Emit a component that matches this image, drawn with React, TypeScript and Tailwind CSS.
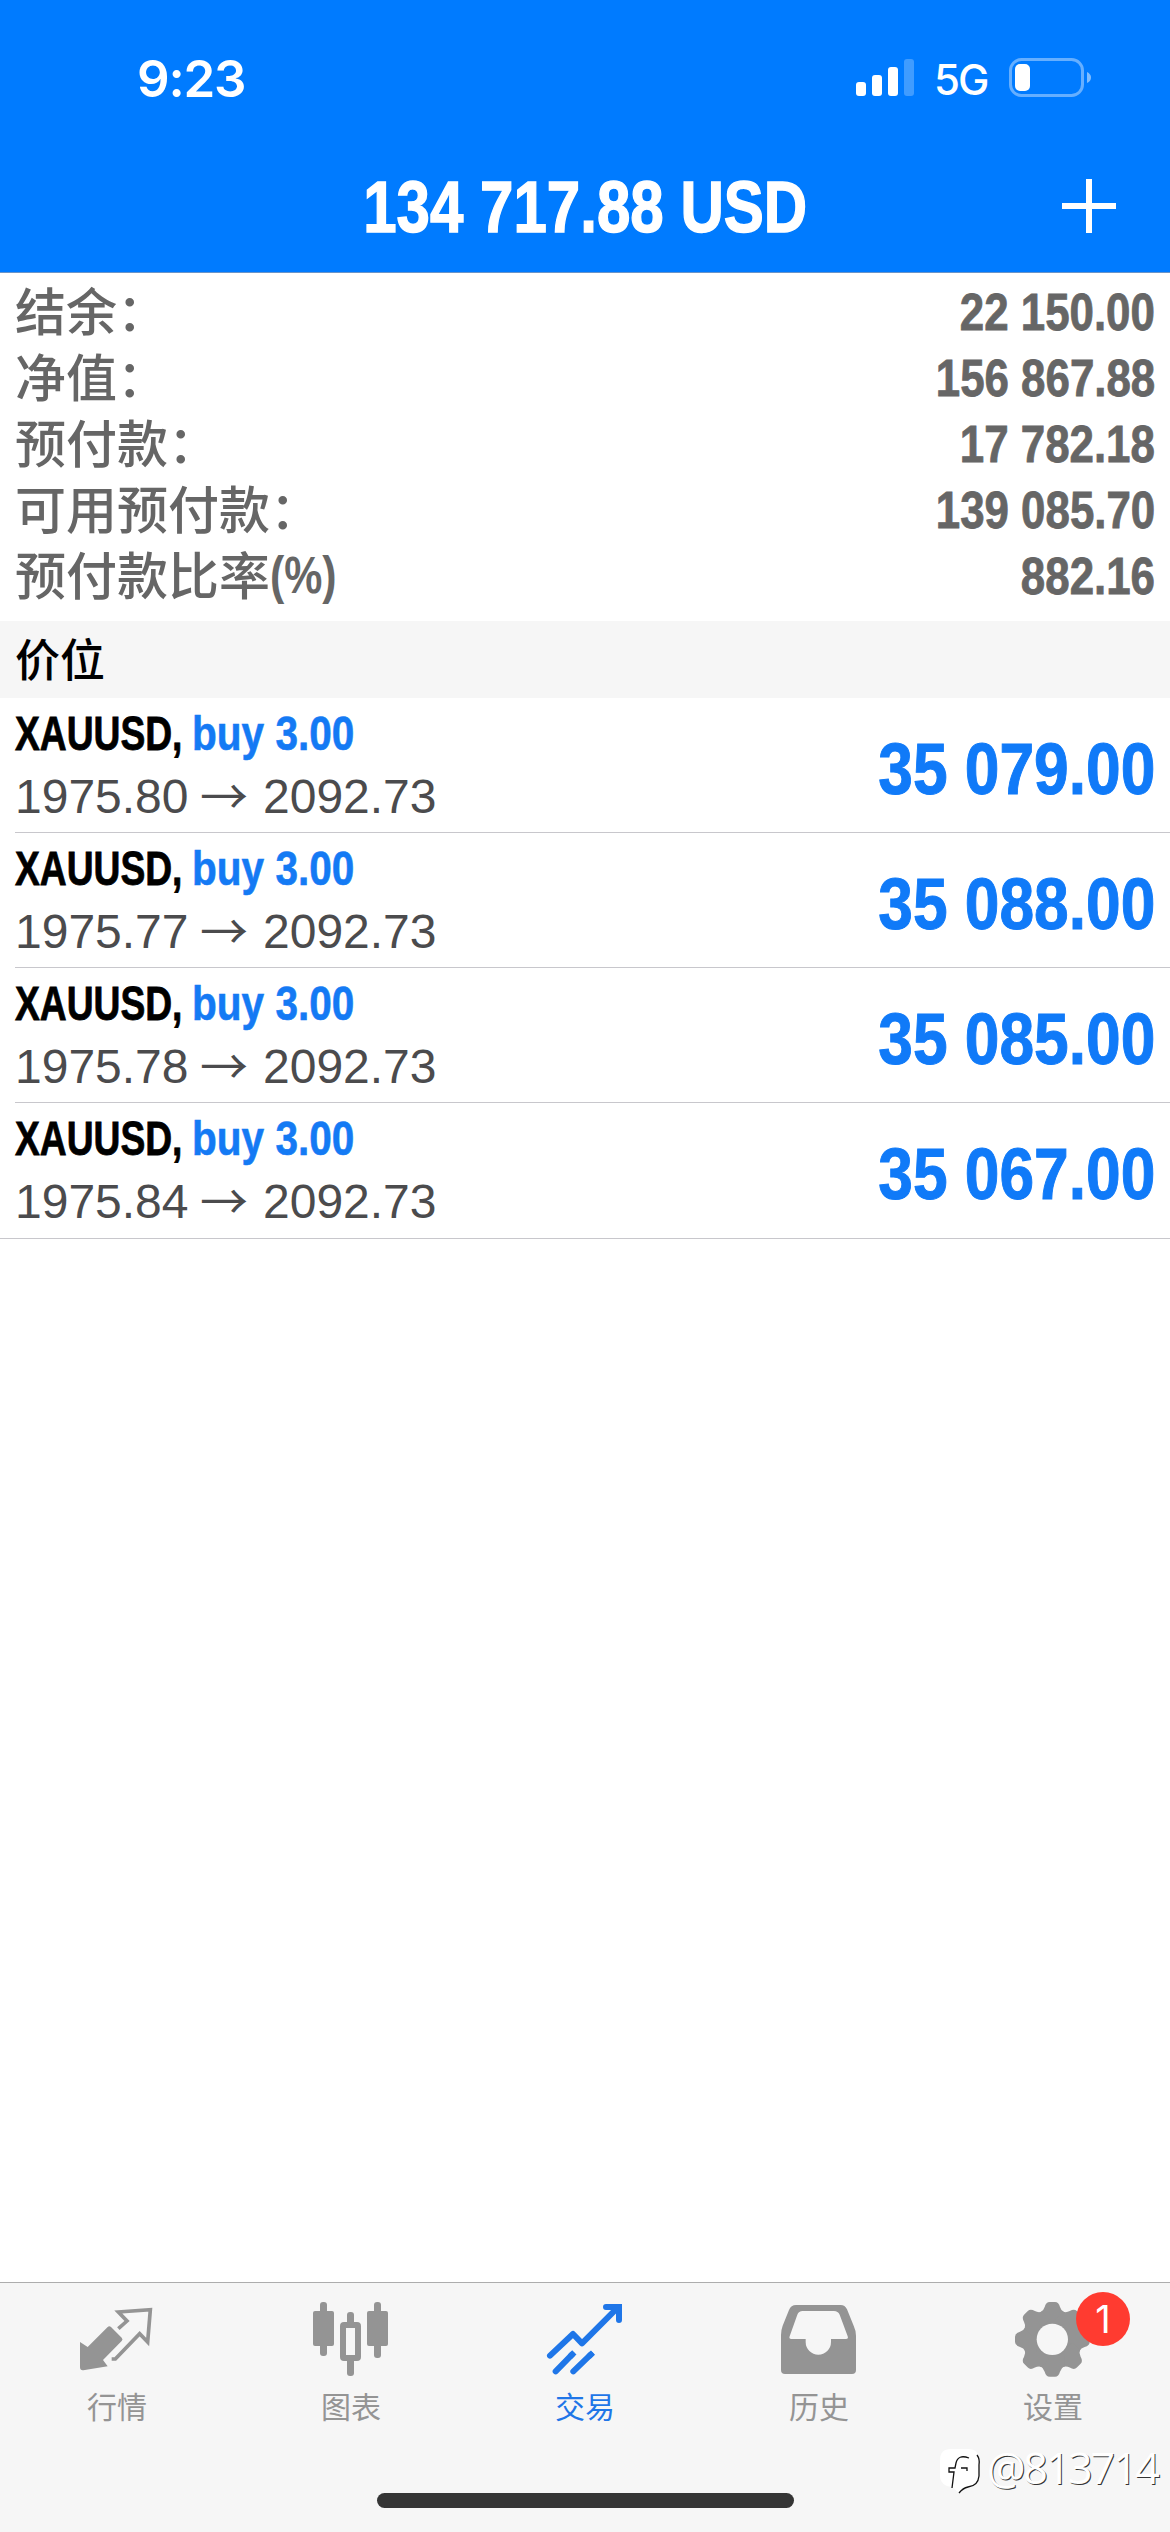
import React from 'react';

interface Position {
  symbol: string;
  action: string;
  open: string;
  current: string;
  profit: string;
}

const summary = [
  { label: '结余：', value: '22 150.00' },
  { label: '净值：', value: '156 867.88' },
  { label: '预付款：', value: '17 782.18' },
  { label: '可用预付款：', value: '139 085.70' },
  { label: '预付款比率', suffix: '(%)', value: '882.16' },
];

const positions: Position[] = [
  { symbol: 'XAUUSD,', action: 'buy 3.00', open: '1975.80', current: '2092.73', profit: '35 079.00' },
  { symbol: 'XAUUSD,', action: 'buy 3.00', open: '1975.77', current: '2092.73', profit: '35 088.00' },
  { symbol: 'XAUUSD,', action: 'buy 3.00', open: '1975.78', current: '2092.73', profit: '35 085.00' },
  { symbol: 'XAUUSD,', action: 'buy 3.00', open: '1975.84', current: '2092.73', profit: '35 067.00' },
];

const QuotesIcon = () => (
  <svg viewBox="111 90 240 240" className="w-20 h-20">
    <path
      d="M120 216L143 231L203 171Q208 166 213 171L245 203Q250 208 245 213L189 270L203 289L130 301Q120 302 120 292Z"
      fill="currentColor"
    />
    <path
      d="M235 176L261 153L235 126L331 119L323 216L299 191L226 267H215"
      fill="none"
      stroke="currentColor"
      strokeWidth="11"
    />
  </svg>
);

const ChartIcon = () => (
  <svg viewBox="813 90 240 240" className="w-20 h-20" fill="currentColor">
    <rect x="840" y="96" width="21" height="162" rx="9" />
    <rect x="819" y="123" width="63" height="105" rx="6" />
    <rect x="1002" y="96" width="21" height="168" rx="9" />
    <rect x="981" y="123" width="63" height="105" rx="6" />
    <rect x="921" y="126" width="21" height="40" rx="9" />
    <rect x="921" y="262" width="21" height="56" rx="9" />
    <rect x="909" y="165" width="45" height="99" rx="3" fill="none" stroke="currentColor" strokeWidth="18" />
  </svg>
);

const TradeIcon = () => (
  <svg viewBox="135 90 240 240" className="w-20 h-20" fill="none" stroke="currentColor" strokeWidth="18">
    <path d="M150 257L219 192L246 220L350 116" strokeLinecap="round" strokeLinejoin="round" />
    <path d="M318 111H357V150" strokeLinecap="round" />
    <path d="M167 304L216 254M220 304L272 254" strokeLinecap="round" />
    <path d="M210 260L223 247M266 260L279 248" />
  </svg>
);

const HistoryIcon = () => (
  <svg viewBox="837 90 240 240" className="w-20 h-20" fill="currentColor">
    <path
      fillRule="evenodd"
      d="M843 300V195Q843 180 848 167L867 120Q873 105 888 105H1022Q1035 105 1041 118L1061 167Q1068 182 1068 197V300Q1068 312 1056 312H855Q843 312 843 300ZM892 134L869 199Q866 207 874 207H917V216A38 38 0 0 0 993 216V207H1038Q1046 207 1043 199L1019 134Q1014 123 1002 123H908Q896 123 892 134Z"
    />
  </svg>
);

const SettingsIcon = () => (
  <svg viewBox="339 90 240 240" className="w-20 h-20" fill="currentColor">
    <circle cx="457" cy="208" r="89" />
    {[0, 45, 90, 135, 180, 225, 270, 315].map((angle) => (
      <path
        key={angle}
        transform={`rotate(${angle} 457 208)`}
        d="M421 127Q431 122 434 111Q438 96 449 96H465Q476 96 480 111Q483 122 493 127V160H421Z"
      />
    ))}
    <circle cx="457" cy="208" r="47" fill="#f6f6f6" />
  </svg>
);

const tabs = [
  { label: '行情', icon: QuotesIcon },
  { label: '图表', icon: ChartIcon },
  { label: '交易', icon: TradeIcon, active: true },
  { label: '历史', icon: HistoryIcon },
  { label: '设置', icon: SettingsIcon, badge: 1 },
];

const StatusBar = () => (
  <div className="h-[140px] pl-[137px] pr-[77px] pt-[58px] flex justify-between items-start">
    <span className="font-['Inter',sans-serif] text-[51px] leading-[41px] font-semibold tracking-[-1.2px]">9:23</span>
    <div className="flex items-start">
      <svg viewBox="0 0 58 39" className="w-[58px] h-[39px]" fill="white">
        <rect x="0" y="24" width="10" height="14" rx="3" />
        <rect x="16" y="17" width="10" height="21" rx="3" />
        <rect x="32" y="9" width="10" height="29" rx="3" />
        <rect x="48" y="1" width="10" height="37" rx="3" opacity="0.25" />
      </svg>
      <span className="w-[55px] ml-5 mr-5 font-['Inter',sans-serif] text-[42px] leading-[43px] font-medium tracking-[-2px]">
        5G
      </span>
      <svg viewBox="0 0 84 39" className="w-[84px] h-[39px]">
        <rect x="1.5" y="1.5" width="72" height="36" rx="11" fill="none" stroke="white" strokeWidth="3" opacity="0.4" />
        <rect x="6" y="6" width="15" height="27" rx="5" fill="white" />
        <path d="M78 14Q82 16 82 19.5Q82 23 78 25Z" fill="white" opacity="0.5" />
      </svg>
    </div>
  </div>
);

const App: React.FC = () => {
  return (
    <div className="relative w-[1170px] h-[2532px] flex flex-col bg-white overflow-hidden font-['Liberation_Sans','Noto_Sans_CJK_SC',sans-serif]">
      <header className="h-[273px] bg-[#007bff] border-b border-[#6a94c8] text-white">
        <StatusBar />
        <div className="h-[132px] grid grid-cols-[1fr_auto_1fr] items-center">
          <div />
          <h1 className="pt-[3px] text-[72px] leading-[129px] font-bold w-[440px] flex justify-center whitespace-nowrap">
            <span className="scale-x-[0.834] [-webkit-text-stroke:1.4px]">134 717.88 USD</span>
          </h1>
          <svg viewBox="0 0 54 54" className="w-[54px] h-[54px] justify-self-end mr-[54px]" stroke="white" strokeWidth="6">
            <path d="M0 27H54M27 0V54" />
          </svg>
        </div>
      </header>

      <section className="h-[348px] pt-[6px] pl-[15px] pr-[15px] text-[#666666]">
        {summary.map((row) => (
          <div key={row.label} className="h-[66px] flex justify-between text-[51px] whitespace-nowrap">
            <span className="flex leading-[60px] font-['Noto_Sans_CJK_SC',sans-serif] font-medium">
              {row.label}
              {row.suffix && (
                <span className="font-['Liberation_Sans',sans-serif] leading-[66px] font-bold origin-left scale-x-[0.84]">
                  {row.suffix}
                </span>
              )}
            </span>
            <span className="leading-[68px] font-bold origin-right scale-x-[0.86] [-webkit-text-stroke:0.8px]">{row.value}</span>
          </div>
        ))}
      </section>

      <div className="h-[77px] pl-[15px] bg-[#f6f6f6] font-['Noto_Sans_CJK_SC',sans-serif] text-[45px] leading-[73px] font-medium text-black">
        价位
      </div>

      <section className="border-b border-[#c8c7cc] bg-white">
        {positions.map((p, i) => (
          <div key={i} className="pl-[15px]">
            <div
              className={`h-[135px] pr-[15px] flex justify-between items-start whitespace-nowrap ${
                i < positions.length - 1 ? 'border-b border-[#c8c7cc]' : ''
              }`}
            >
              <div className="pt-1">
                <div className="flex text-[48px] leading-[64px] font-bold">
                  <span className="w-[177px] shrink-0">
                    <span className="inline-block origin-left scale-x-[0.775] [-webkit-text-stroke:0.8px] text-black">{p.symbol}</span>
                  </span>
                  <span className="inline-block origin-left scale-x-[0.845] [-webkit-text-stroke:0.6px] text-[#147af4]">{p.action}</span>
                </div>
                <div className="flex text-[48px] leading-[62px] text-[#4b4b4d]">
                  <span className="w-[185px]">{p.open}</span>
                  <span className="w-[63px] leading-[54px] font-['Noto_Sans_CJK_SC',sans-serif]">→</span>
                  <span>{p.current}</span>
                </div>
              </div>
              <span className="pt-[3px] text-[72px] leading-[136px] font-bold origin-right scale-x-[0.865] [-webkit-text-stroke:1px] text-[#107af8]">
                {p.profit}
              </span>
            </div>
          </div>
        ))}
      </section>

      <div className="flex-1" />

      <nav className="h-[250px] pt-[17px] bg-[#f6f6f6] border-t border-[#adadad] flex flex-col">
        <div className="grid grid-cols-5">
          {tabs.map(({ label, icon: Icon, active, badge }) => (
            <div key={label} className={`flex flex-col items-center ${active ? 'text-[#1f76e8]' : 'text-[#949494]'}`}>
              <div className="relative">
                <Icon />
                {badge && (
                  <span className="absolute left-[63px] -top-2 w-[54px] h-[54px] rounded-full bg-[#ff3b30] text-white text-center font-['Inter',sans-serif] text-[38px] leading-[54px]">
                    {badge}
                  </span>
                )}
              </div>
              <span className="mt-[3px] font-['Noto_Sans_CJK_SC',sans-serif] text-[30px] leading-[44px]">{label}</span>
            </div>
          ))}
        </div>
        <div className="mt-auto mb-6 mx-auto w-[417px] h-[15px] rounded-full bg-[#353535]" />
      </nav>

      {/* user watermark over the tab bar */}
      <div className="absolute left-[939px] top-[2445px] flex items-start text-white">
        <svg viewBox="0 0 42 50" className="w-[42px] h-[50px]">
          <path d="M12 4H29Q40 4 40 15V30Q40 41 29 42Q24 43 20 48L13 42Q1 41 1 30V15Q1 4 12 4Z" fill="white" />
          <path d="M38 10Q41 14 40 20V31Q39 41 29 42Q24 43 20 48" fill="none" stroke="#111" strokeWidth="1.3" />
          <path d="M30 13Q19 9 17 18L16 23H10V27H15L13 43M22 23H28V26" fill="none" stroke="#111" strokeWidth="1.3" />
        </svg>
        <span className="ml-[6px] font-['Open_Sans',sans-serif] font-normal text-[43px] leading-[46px] tracking-[-2.2px] whitespace-nowrap [text-shadow:1px_1px_0_#333]">
          @813714
        </span>
      </div>
    </div>
  );
};

export default App;
